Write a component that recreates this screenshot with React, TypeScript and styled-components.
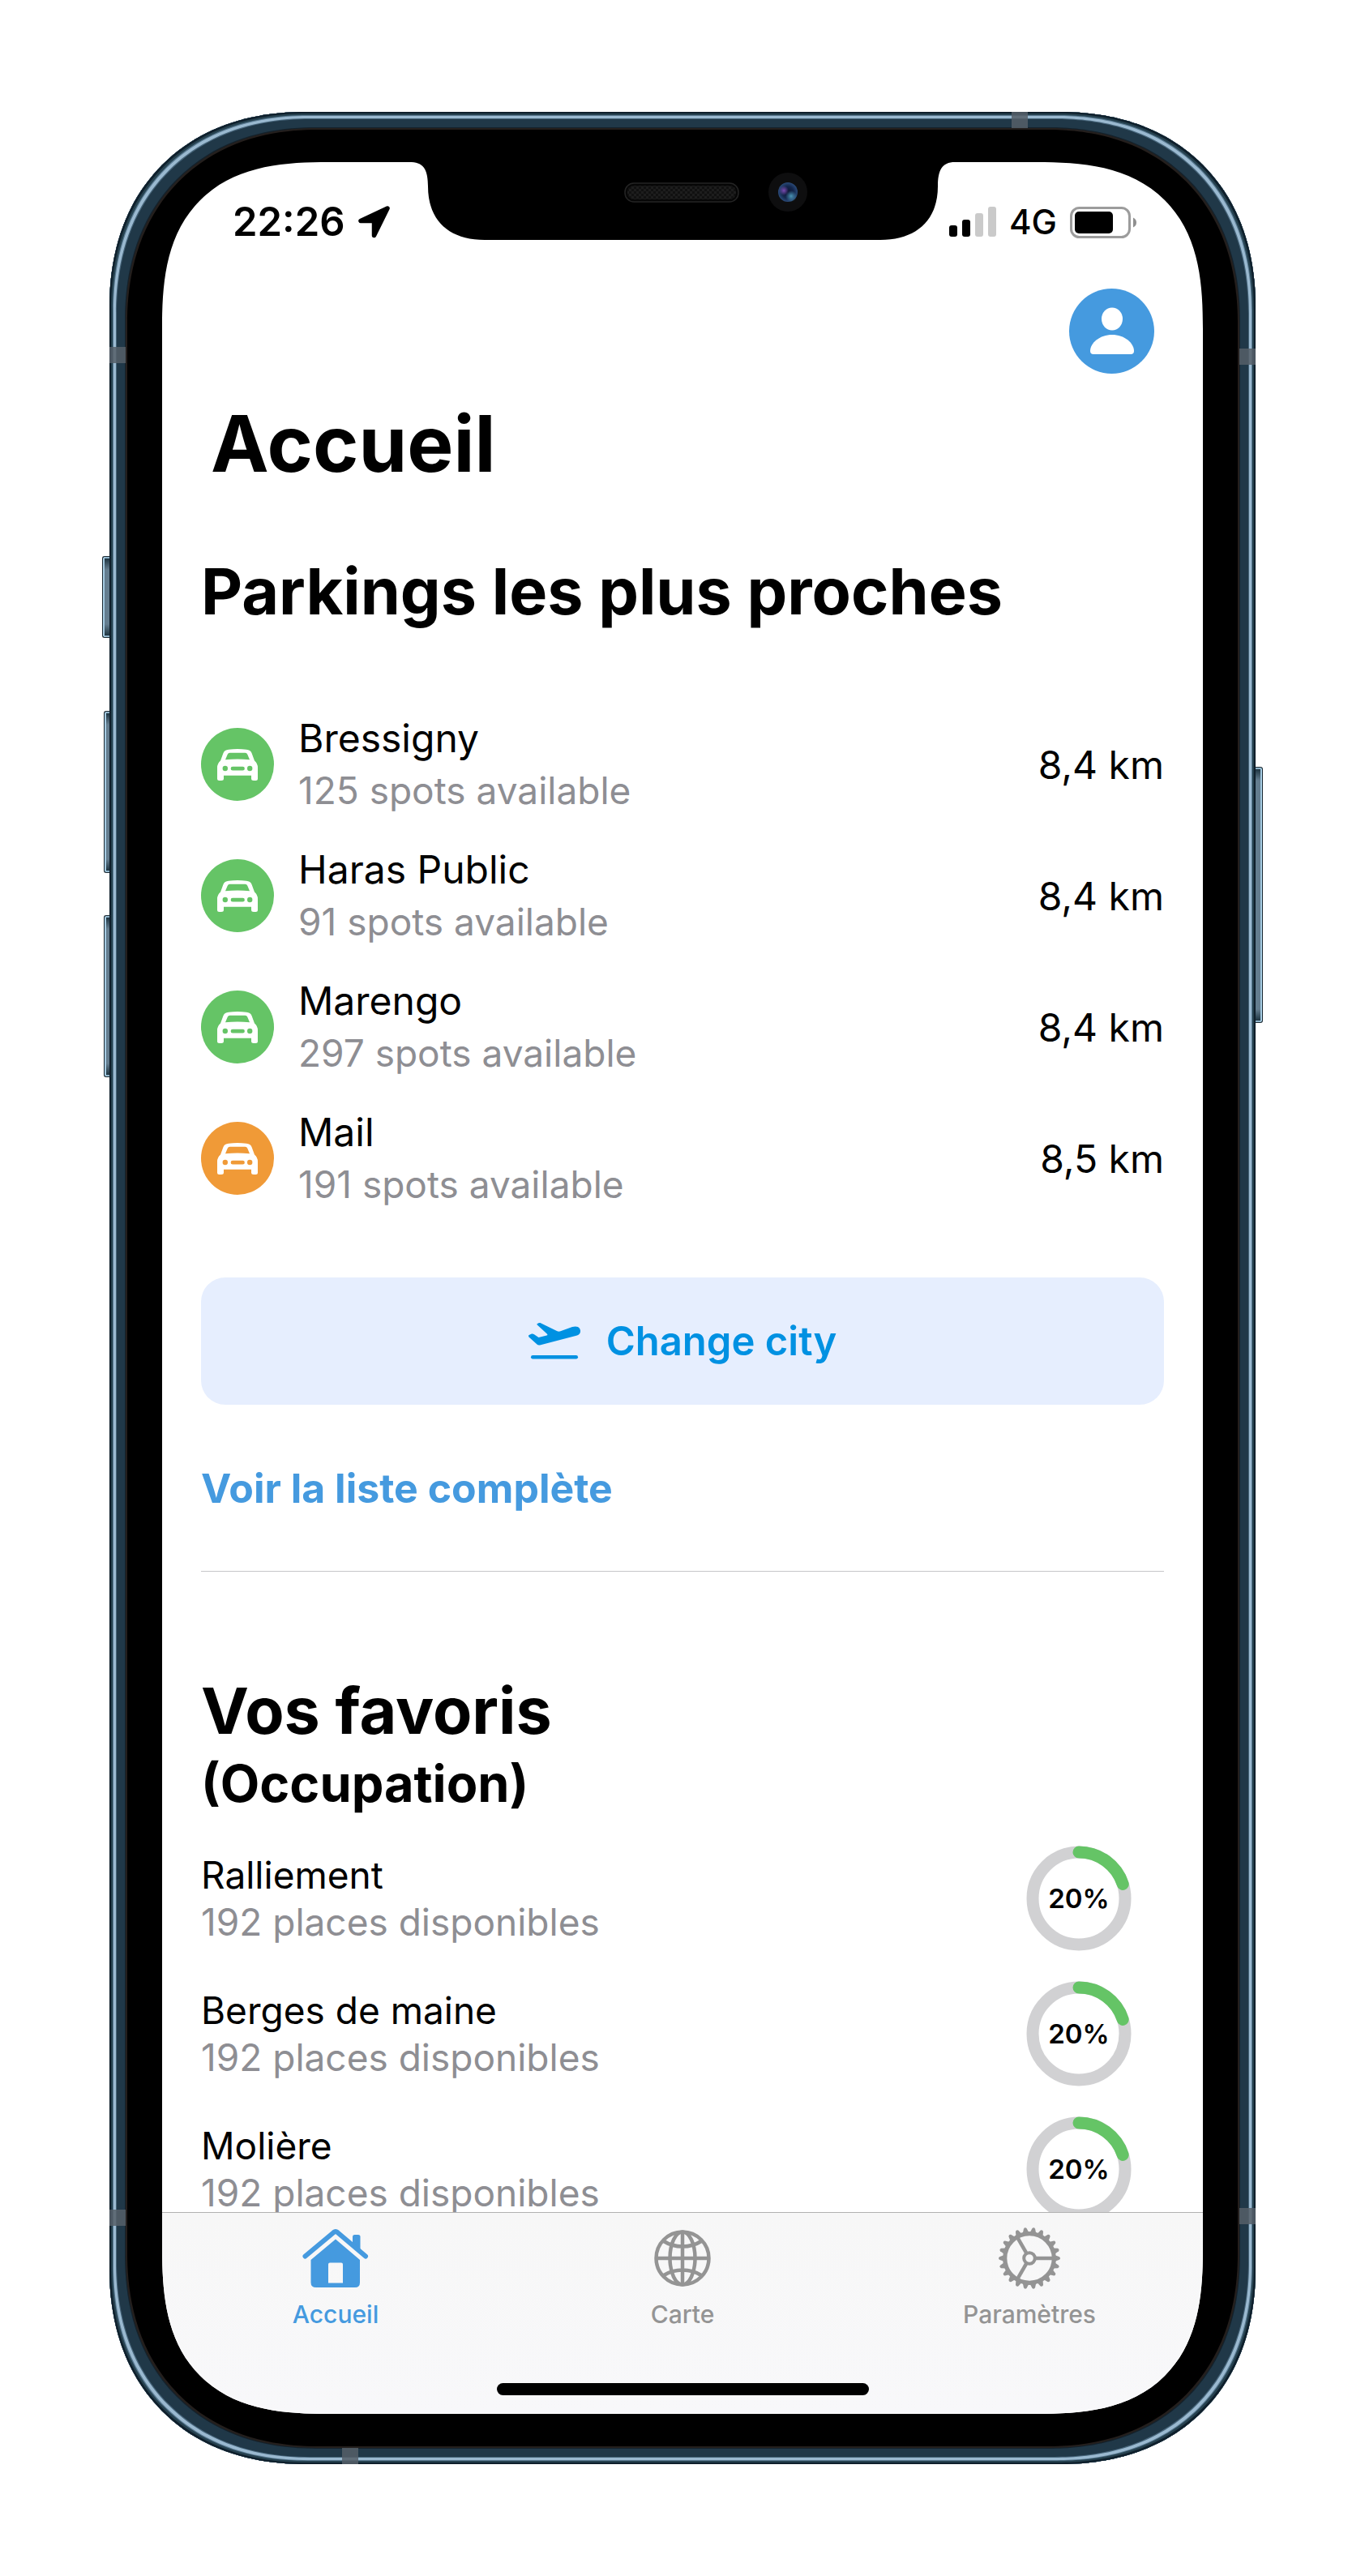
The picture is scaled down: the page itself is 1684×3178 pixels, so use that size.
import React from "react";
import styled, { createGlobalStyle, css } from "styled-components";

const blue = "#459adf";
const green = "#65c466";
const orange = "#f09a37";
const grey = "#8e8e93";

const GlobalStyle = createGlobalStyle`
  *, *::before, *::after { box-sizing: border-box; }
  body {
    margin: 0;
    background: #fff;
    color: #000;
    font-family: Inter, "Liberation Sans", sans-serif;
  }
  h1, h2, h3, p, ul { margin: 0; padding: 0; }
  ul { list-style: none; }
  a { color: inherit; text-decoration: none; }
  svg { display: block; flex: none; }
`;

/* ---------- Device ---------- */

const Page = styled.div`
  display: flex;
  height: 100vh;
  padding: 138px 135px;
`;

const Phone = styled.div`
  position: relative;
  flex: 1;
  display: flex;
  min-width: 0;
  padding: 62px 65px;
  border-radius: 225px;
  background: #000;
  box-shadow:
    inset 0 0 0 2px #0f1f2b,
    inset 0 0 0 4px #25414f,
    inset 0 0 0 5px #58788f,
    inset 0 0 0 8px #9ab9d0,
    inset 0 0 0 9px #47657a,
    inset 0 0 0 19px #203848,
    inset 0 0 0 20px #14222c,
    inset 0 0 0 22px #241f1d;
  @supports (corner-shape: superellipse(1.4)) {
    border-radius: 242px;
    corner-shape: superellipse(1.14);
  }
`;

const Screen = styled.div`
  position: relative;
  flex: 1;
  display: flex;
  flex-direction: column;
  min-width: 0;
  overflow: hidden;
  border-radius: 160px;
  background: #fff;
  @supports (corner-shape: superellipse(1.4)) {
    border-radius: 206px;
    corner-shape: superellipse(1.42);
  }
`;

const SideKey = styled.span<{ $side: "left" | "right"; $top: number; $length: number; $depth: number }>`
  position: absolute;
  top: ${(p) => p.$top}px;
  ${(p) => p.$side}: ${(p) => -p.$depth}px;
  width: ${(p) => p.$depth}px;
  height: ${(p) => p.$length}px;
  border: 1px solid #1c2a33;
  border-${(p) => (p.$side === "left" ? "right" : "left")}: 0;
  border-radius: ${(p) => (p.$side === "left" ? "3px 0 0 3px" : "0 3px 3px 0")};
  background: linear-gradient(#142a36, #647d8f 16px, #647d8f calc(100% - 16px), #142a36);
  box-shadow: inset ${(p) => (p.$side === "left" ? "2px" : "-2px")} 0 0 #a5cbe2, inset 0 2px 0 #8fb3c9,
    inset 0 -2px 0 #8fb3c9;
`;

const bandEdge = {
  top: css`top: 0;`,
  bottom: css`bottom: 0;`,
  left: css`left: 0;`,
  right: css`right: 0;`,
};

const Band = styled.span<{ $edge: keyof typeof bandEdge; $along: string }>`
  position: absolute;
  ${(p) => bandEdge[p.$edge]}
  ${(p) => p.$along};
  width: 20px;
  height: 20px;
  background: rgba(86, 95, 104, 0.85);
`;

const Notch = styled.svg`
  position: absolute;
  top: 0;
  left: 50%;
  transform: translateX(-50%);
`;

/* ---------- Status bar and header ---------- */

const StatusBar = styled.div`
  display: flex;
  align-items: center;
  justify-content: space-between;
  height: 148px;
  padding: 0 82px 0 87px;
`;

const StatusGroup = styled.div`
  display: flex;
  align-items: center;
  gap: 16px;
`;

const Time = styled.span`
  font-size: 49px;
  line-height: 64px;
  font-weight: 600;
`;

const Network = styled.span`
  font-size: 42px;
  line-height: 64px;
  font-weight: 500;
`;

const Header = styled.header`
  display: flex;
  flex-direction: column;
  gap: 26px;
  padding: 8px 60px 0;
`;

const Avatar = styled.button`
  align-self: flex-end;
  width: 105px;
  height: 105px;
  padding: 0;
  border: 0;
  border-radius: 50%;
  background: ${blue};
`;

const Title = styled.h1`
  font-size: 96px;
  line-height: 120px;
  font-weight: 700;
`;

/* ---------- Content ---------- */

const Content = styled.main`
  flex: 1;
  min-height: 0;
  overflow: hidden;
  padding: 72px 48px 0;
`;

const Heading = styled.h2`
  font-size: 79px;
  line-height: 100px;
  font-weight: 700;
`;

const SubHeading = styled.h3`
  font-size: 63px;
  line-height: 80px;
  font-weight: 700;
`;

const ParkingList = styled.ul`
  padding-top: 83px;
`;

const ParkingRow = styled.li`
  display: flex;
  align-items: center;
  gap: 30px;
  height: 162px;
`;

const CarBadge = styled.span<{ $color: string }>`
  display: grid;
  place-items: center;
  width: 90px;
  height: 90px;
  border-radius: 50%;
  background: ${(p) => p.$color};
`;

const RowText = styled.div<{ $compact?: boolean }>`
  flex: 1;
  font-size: ${(p) => (p.$compact ? 46 : 48)}px;
  line-height: ${(p) => (p.$compact ? 58 : 65)}px;
`;

const Muted = styled.p`
  color: ${grey};
  font-size: 46px;
`;

const Distance = styled.span`
  font-size: 48px;
  line-height: 65px;
`;

const CityButton = styled.button`
  display: flex;
  align-items: center;
  justify-content: center;
  gap: 32px;
  width: 100%;
  height: 157px;
  margin-top: 66px;
  padding: 0;
  border: 0;
  border-radius: 30px;
  background: #e6eefe;
  color: #0091e2;
  font-family: inherit;
  font-size: 49px;
  font-weight: 600;
`;

const FullListLink = styled.a`
  display: block;
  margin-top: 71px;
  color: ${blue};
  font-size: 50px;
  line-height: 65px;
  font-weight: 700;
`;

const Divider = styled.hr`
  height: 1px;
  margin: 69px 0 121px;
  border: 0;
  background: #c6c6c8;
`;

const FavoriteList = styled.ul`
  padding-top: 18px;
`;

const FavoriteRow = styled.li`
  display: flex;
  align-items: center;
  height: 167px;
  padding-right: 40px;
`;

const Gauge = styled.div`
  display: grid;
  place-items: center;
  font-size: 33px;
  font-weight: 600;
  > * { grid-area: 1 / 1; }
`;

/* ---------- Tab bar ---------- */

const TabBar = styled.footer`
  display: flex;
  flex-direction: column;
  align-items: center;
  justify-content: space-between;
  height: 249px;
  padding: 17px 0 23px;
  border-top: 1px solid #b2b2b2;
  background: linear-gradient(#f7f7f7, #f8f8fa);
`;

const Tabs = styled.nav`
  display: grid;
  grid-template-columns: repeat(3, 1fr);
  width: 100%;
`;

const Tab = styled.a<{ $active?: boolean }>`
  display: flex;
  flex-direction: column;
  align-items: center;
  gap: 12px;
  color: ${(p) => (p.$active ? blue : "#949494")};
  font-size: 30px;
  line-height: 36px;
  font-weight: 500;
`;

const HomeIndicator = styled.div`
  width: 459px;
  height: 15px;
  border-radius: 8px;
  background: #000;
`;

/* ---------- Drawings ---------- */

const NotchArt = () => (
  <Notch width="672" height="97" viewBox="0 0 672 97" aria-hidden="true">
    <defs>
      <pattern id="mesh" width="6" height="6" patternUnits="userSpaceOnUse">
        <rect width="6" height="6" fill="#1d1d1d" />
        <path d="M0 0h3v3H0zM3 3h3v3H3z" fill="#111" />
      </pattern>
      <radialGradient id="lens">
        <stop offset="0" stopColor="#0c1230" />
        <stop offset="0.6" stopColor="#14274d" />
        <stop offset="1" stopColor="#2a4a78" />
      </radialGradient>
      <radialGradient id="violet">
        <stop offset="0" stopColor="#7a4bb0" />
        <stop offset="1" stopColor="#7a4bb0" stopOpacity="0" />
      </radialGradient>
      <radialGradient id="cyan">
        <stop offset="0" stopColor="#4a94b4" />
        <stop offset="1" stopColor="#4a94b4" stopOpacity="0" />
      </radialGradient>
    </defs>
    <path d="M0 0C17 0 22 10 22 30C22 72 48 96 92 96H580C624 96 651 72 651 30C651 10 656 0 672 0Z" />
    <rect x="265" y="26" width="140" height="23" rx="11" fill="#060606" stroke="#242424" strokeWidth="1.5" />
    <rect x="268" y="29" width="134" height="17" rx="8" fill="url(#mesh)" />
    <circle cx="466" cy="37" r="24" fill="#0e0e0f" />
    <circle cx="466" cy="37" r="12" fill="url(#lens)" />
    <circle cx="461" cy="35" r="6" fill="url(#violet)" />
    <circle cx="470" cy="42" r="7" fill="url(#cyan)" />
  </Notch>
);

const LocationArrow = () => (
  <svg width="39" height="40" viewBox="0 0 39 40" aria-hidden="true">
    <path d="M36 3L3 18.5H19.5V36.5Z" stroke="#000" strokeWidth="5.5" strokeLinejoin="round" />
  </svg>
);

const Signal = () => (
  <svg width="58" height="38" viewBox="0 0 58 38" aria-hidden="true">
    <rect x="0" y="23" width="10" height="14" rx="3" />
    <rect x="16" y="16" width="10" height="21" rx="3" />
    <rect x="32" y="8" width="10" height="29" rx="3" fill="#cacaca" />
    <rect x="48" y="0" width="10" height="37" rx="3" fill="#cacaca" />
  </svg>
);

const Battery = () => (
  <svg width="82" height="39" viewBox="0 0 82 39" aria-hidden="true">
    <rect x="1.5" y="1.5" width="72" height="36" rx="10" fill="none" stroke="#9c9c9c" strokeWidth="3" />
    <rect x="6" y="6" width="47" height="27" rx="5" />
    <path d="M78 13.5C81 15 82 17 82 19.5S81 24 78 25.5Z" fill="#8f8f8f" />
  </svg>
);

const Person = () => (
  <svg width="105" height="105" viewBox="0 0 105 105" fill="#fff" aria-hidden="true">
    <ellipse cx="53" cy="37.5" rx="13" ry="14" />
    <path d="M53 57C68 57 80 67 80 77Q80 81 76 81H30Q26 81 26 77C26 67 38 57 53 57Z" />
  </svg>
);

const Car = () => (
  <svg width="50" height="39" viewBox="0 0 50 39" fill="#fff" aria-hidden="true">
    <path
      fillRule="evenodd"
      d="M14 0.7Q25 -0.7 36 0.7Q41 1.2 42.5 5L46 14.5Q50 18 50 23V36.5Q50 39 47.5 39H45Q42 39 42 36.5V32.7H8V36.5Q8 39 5 39H2.5Q0 39 0 36.5V23Q0 18 4 14.5L7.5 5Q9 1.2 14 0.7ZM15.5 4.8Q13.5 4.8 12.7 6.7L10 13.2Q25 12 40 13.2L37.3 6.7Q36.5 4.8 34.5 4.8ZM9.8 20.8A3.2 3.2 0 1 0 9.8 27.2A3.2 3.2 0 1 0 9.8 20.8ZM40.2 20.8A3.2 3.2 0 1 0 40.2 27.2A3.2 3.2 0 1 0 40.2 20.8ZM19 21.8A2.2 2.2 0 0 0 19 26.5H31.5A2.2 2.2 0 0 0 31.5 21.8Z"
    />
  </svg>
);

const PlaneTakeoff = () => (
  <svg width="64" height="45" viewBox="0 0 64 45" fill="currentColor" aria-hidden="true">
    <path d="M0.6 15L4 13.6Q5.5 13.3 7 14.3L12.5 18L22.5 15.6Q24 15 23 13.8L10.8 2.6Q10 1.6 11 1L13 0Q14.3 -0.3 16 0.7L35.5 10.3Q37.5 11.2 39.5 10.3L54 5Q58 3.8 61 5Q64.5 7 64 11Q63.5 14 60 15.5L15 27.2Q12 28 10.5 26.5L0.5 17.5Q-0.5 15.8 0.6 15Z" />
    <rect x="3" y="40" width="58" height="4.5" rx="2.2" />
  </svg>
);

const House = () => (
  <svg width="82" height="78" viewBox="0 -3 82 78" fill="currentColor" aria-hidden="true">
    <path d="M62 20V9.5Q62 7 64.5 7H69Q71.5 7 71.5 9.5V30Z" />
    <path d="M3.5 33.5L38.5 4.2Q41 2.2 43.5 4.2L78 33.5" fill="none" stroke="currentColor" strokeWidth="6" strokeLinecap="round" />
    <path
      fillRule="evenodd"
      d="M41 12.5L71 38V66Q71 72 65 72H17Q10.5 72 10.5 66V38ZM34 41.5Q32 41.5 32 43.5V66.5H50V43.5Q50 41.5 48 41.5Z"
    />
  </svg>
);

const Globe = () => (
  <svg width="70" height="78" viewBox="0 -4 70 78" fill="none" stroke="currentColor" strokeWidth="4.5" aria-hidden="true">
    <circle cx="35" cy="35" r="32.5" />
    <ellipse cx="35" cy="35" rx="15.5" ry="32.5" />
    <path d="M35 2V68M2 35H68M12 14Q22 20.5 35 20.5T58 14M12 56Q22 49.5 35 49.5T58 56" />
  </svg>
);

const TEETH = Array.from({ length: 22 }, (_, i) => (i * 360) / 22);

const Gear = () => (
  <svg width="78" height="78" viewBox="-39 -39 78 78" fill="none" stroke="currentColor" aria-hidden="true">
    <circle r="30.3" strokeWidth="5.2" />
    {TEETH.map((angle) => (
      <path key={angle} d="M31 -4L37 -1.8Q39 0 37 1.8L31 4Z" fill="currentColor" stroke="none" transform={`rotate(${angle})`} />
    ))}
    <circle r="6.8" strokeWidth="4" />
    {[0, 120, 240].map((angle) => (
      <path key={angle} d="M8 0H29" strokeWidth="4.5" transform={`rotate(${angle})`} />
    ))}
  </svg>
);

const Ring = ({ percent }: { percent: number }) => (
  <svg width="130" height="130" viewBox="-65 -65 130 130" fill="none" strokeWidth="15" aria-hidden="true">
    <circle r="57" stroke="#d1d1d3" />
    <circle
      r="57"
      stroke={green}
      strokeLinecap="round"
      pathLength={100}
      strokeDasharray={`${percent} 100`}
      transform="rotate(-90)"
    />
  </svg>
);

/* ---------- Data ---------- */

const parkings = [
  { name: "Bressigny", spots: 125, distance: "8,4 km", color: green },
  { name: "Haras Public", spots: 91, distance: "8,4 km", color: green },
  { name: "Marengo", spots: 297, distance: "8,4 km", color: green },
  { name: "Mail", spots: 191, distance: "8,5 km", color: orange },
];

const favorites = [
  { name: "Ralliement", places: 192, percent: 20 },
  { name: "Berges de maine", places: 192, percent: 20 },
  { name: "Molière", places: 192, percent: 20 },
];

export default function App() {
  return (
    <Page>
      <GlobalStyle />
      <Phone>
        <SideKey $side="left" $top={548} $length={101} $depth={9} />
        <SideKey $side="left" $top={739} $length={200} $depth={7} />
        <SideKey $side="left" $top={991} $length={200} $depth={7} />
        <SideKey $side="right" $top={808} $length={316} $depth={9} />
        <Band $edge="left" $along="top: 290px" />
        <Band $edge="right" $along="top: 292px" />
        <Band $edge="top" $along="right: 281px" />
        <Band $edge="left" $along="bottom: 294px" />
        <Band $edge="right" $along="bottom: 296px" />
        <Band $edge="bottom" $along="left: 287px" />

        <Screen>
          <NotchArt />
          <StatusBar>
            <StatusGroup>
              <Time>22:26</Time>
              <LocationArrow />
            </StatusGroup>
            <StatusGroup>
              <Signal />
              <Network>4G</Network>
              <Battery />
            </StatusGroup>
          </StatusBar>

          <Header>
            <Avatar type="button" aria-label="Profil">
              <Person />
            </Avatar>
            <Title>Accueil</Title>
          </Header>

          <Content>
            <Heading>Parkings les plus proches</Heading>
            <ParkingList>
              {parkings.map((p) => (
                <ParkingRow key={p.name}>
                  <CarBadge $color={p.color}>
                    <Car />
                  </CarBadge>
                  <RowText>
                    <p>{p.name}</p>
                    <Muted>{p.spots} spots available</Muted>
                  </RowText>
                  <Distance>{p.distance}</Distance>
                </ParkingRow>
              ))}
            </ParkingList>
            <CityButton type="button">
              <PlaneTakeoff />
              Change city
            </CityButton>
            <FullListLink href="#liste">Voir la liste complète</FullListLink>
            <Divider />
            <Heading>Vos favoris</Heading>
            <SubHeading>(Occupation)</SubHeading>
            <FavoriteList>
              {favorites.map((f) => (
                <FavoriteRow key={f.name}>
                  <RowText $compact>
                    <p>{f.name}</p>
                    <Muted>{f.places} places disponibles</Muted>
                  </RowText>
                  <Gauge>
                    <Ring percent={f.percent} />
                    <span>{f.percent}%</span>
                  </Gauge>
                </FavoriteRow>
              ))}
            </FavoriteList>
          </Content>

          <TabBar>
            <Tabs>
              <Tab href="#accueil" $active aria-current="page">
                <House />
                Accueil
              </Tab>
              <Tab href="#carte">
                <Globe />
                Carte
              </Tab>
              <Tab href="#parametres">
                <Gear />
                Paramètres
              </Tab>
            </Tabs>
            <HomeIndicator />
          </TabBar>
        </Screen>
      </Phone>
    </Page>
  );
}
